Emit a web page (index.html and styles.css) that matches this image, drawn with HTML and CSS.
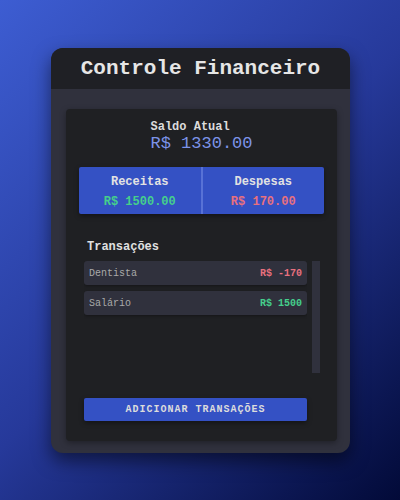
FILE: index.html
```html
<!DOCTYPE html>
<html lang="pt-BR">
<head>
<meta charset="utf-8">
<title>Controle Financeiro</title>
<link rel="stylesheet" href="styles.css">
</head>
<body>
<div class="card">
  <header class="card-header">
    <h1 class="title">Controle Financeiro</h1>
  </header>
  <div class="card-body">
    <div class="panel">
      <div class="balance">
        <div class="balance-inner">
          <div class="balance-label">Saldo Atual</div>
          <div class="balance-value">R$ 1330.00</div>
        </div>
      </div>
      <div class="summary">
        <div class="summary-col">
          <div class="summary-label">Receitas</div>
          <div class="summary-value income">R$ 1500.00</div>
        </div>
        <div class="summary-col divided">
          <div class="summary-label">Despesas</div>
          <div class="summary-value expense">R$ 170.00</div>
        </div>
      </div>
      <section class="transactions">
        <h2 class="tx-title">Transações</h2>
        <div class="tx-scroll">
          <ul class="tx-list">
            <li class="tx-item"><span class="tx-name">Dentista</span><span class="tx-amount expense">R$ -170</span></li>
            <li class="tx-item"><span class="tx-name">Salário</span><span class="tx-amount income">R$ 1500</span></li>
          </ul>
          <div class="tx-track" aria-hidden="true"></div>
        </div>
        <button class="add-btn">ADICIONAR TRANSAÇÕES</button>
      </section>
    </div>
  </div>
</div>
</body>
</html>
```

FILE: styles.css
```css
* { box-sizing: border-box; }
html, body { margin: 0; padding: 0; }
body {
  width: 400px;
  height: 500px;
  background: linear-gradient(135deg, #3d5dd2 0%, #26399a 50%, #020a38 100%);
  font-family: "Liberation Mono", "Courier New", monospace;
  display: flex;
  align-items: center;
  justify-content: center;
}
.card {
  width: 299px;
  height: 405px;
  margin-left: 1px;
  margin-top: 1px;
  background: #30313d;
  border-radius: 12px;
  overflow: hidden;
  box-shadow: 0 8px 18px rgba(0, 0, 0, 0.5);
  display: flex;
  flex-direction: column;
}
.card-header {
  height: 41px;
  background: #1f2025;
  flex: none;
}
.title {
  margin: 0;
  font-size: 21px;
  line-height: 41px;
  font-weight: bold;
  color: #e6e6e6;
  text-align: center;
}
.card-body {
  flex: 1;
  padding: 20px 13px 12px 15px;
  display: flex;
}
.panel {
  flex: 1;
  background: #1f2023;
  border-radius: 4px;
  padding: 11px 13px 20px 13px;
  box-shadow: 0 2px 6px rgba(0, 0, 0, 0.35);
}
.balance { text-align: center; }
.balance-inner { display: inline-block; text-align: left; }
.balance-label {
  font-size: 12px;
  line-height: 14px;
  font-weight: bold;
  color: #dcdcdc;
}
.balance-value {
  font-size: 17px;
  line-height: 20px;
  color: #7c93e8;
}
.summary {
  margin-top: 13px;
  display: flex;
  background: #3451c4;
  border-radius: 2px;
  box-shadow: 0 2px 5px rgba(0, 0, 0, 0.4);
}
.summary-col {
  flex: 1;
  text-align: center;
  padding: 8px 0 5px;
}
.summary-col.divided { border-left: 2px solid #5872d6; }
.summary-label {
  font-size: 12px;
  line-height: 14px;
  font-weight: bold;
  color: #e2e2e2;
}
.summary-value {
  margin-top: 6px;
  font-size: 12px;
  line-height: 14px;
  font-weight: bold;
}
.income { color: #45cf8c; }
.expense { color: #e8707e; }
.transactions {
  margin: 26px 4px 0 5px;
}
.tx-title {
  margin: 0 0 7px 3px;
  font-size: 12px;
  line-height: 14px;
  font-weight: bold;
  color: #e0e0e0;
}
.tx-scroll {
  display: flex;
  gap: 5px;
  height: 112px;
}
.tx-list {
  list-style: none;
  margin: 0;
  padding: 0;
  flex: 1;
  overflow: hidden;
  display: flex;
  flex-direction: column;
  gap: 6px;
}
.tx-track {
  width: 8px;
  flex: none;
  background: #30313d;
}
.tx-item {
  flex: none;
  height: 24px;
  background: #30313d;
  border-radius: 3px;
  box-shadow: 0 1px 3px rgba(0, 0, 0, 0.35);
  display: flex;
  align-items: center;
  justify-content: space-between;
  padding: 0 5px;
  font-size: 10px;
}
.tx-name { color: #a9a9a9; }
.tx-amount { font-weight: bold; }
.add-btn {
  display: block;
  margin-top: 25px;
  width: 223px;
  height: 23px;
  border: none;
  border-radius: 2px;
  background: #3451c4;
  color: #dcdcdc;
  font-family: inherit;
  font-size: 10px;
  font-weight: bold;
  letter-spacing: 1px;
  box-shadow: 0 2px 5px rgba(0, 0, 0, 0.4);
  padding: 0;
}
```
